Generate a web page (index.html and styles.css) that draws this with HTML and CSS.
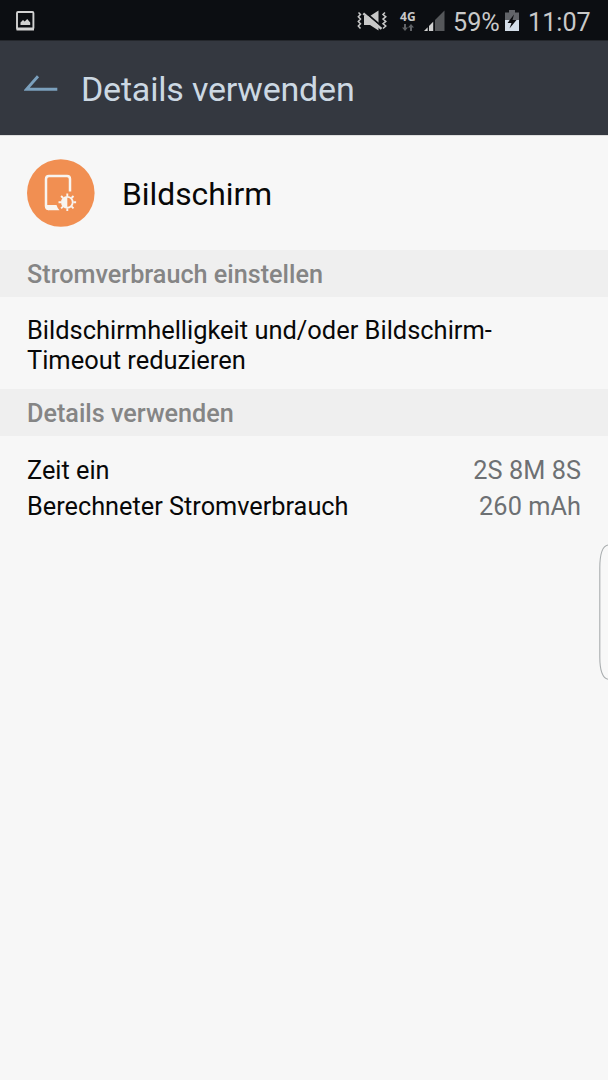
FILE: index.html
```html
<!DOCTYPE html>
<html lang="de">
<head>
<meta charset="utf-8">
<title>Details verwenden</title>
<link rel="stylesheet" href="styles.css">
</head>
<body>
<div class="screen">
  <div class="status">
    <svg class="picture" width="20" height="22" viewBox="0 0 20 22"><rect x="1" y="2" width="16.400" height="17" rx="1" fill="none" stroke="#d2d2d2" stroke-width="1.900"/><path d="M.5 17.500h17.500v3h-17.500z" fill="#d2d2d2"/><path d="M4.500 15v-2.500l2.500-2.500 1.700 1.500 2.500-2.500 3 3.500v2.500z" fill="#d2d2d2"/></svg>
    <svg class="mute" width="31" height="22" viewBox="0 0 31 22"><path d="M1.500 2.500l2 2-2.200 2.300 2.200 2.300-2.200 2.300 2.200 2.300-2.200 2.300 2.200 2.500M28 2.500l-2 2 2.800 2.300-2.800 2.300 2.800 2.300-2.800 2.300 2.800 2.300-2.800 2.500" fill="none" stroke="#c8c8c8" stroke-width="1.500"/><path d="M7 6h6l8.500-5.500v20l-8.500-5.500h-6z" fill="#c8c8c8"/><path d="M8 2.200L25 16.700" stroke="#0c0e12" stroke-width="2"/><path d="M6.300 3.300L24.500 18.800" stroke="#c8c8c8" stroke-width="2.400"/></svg>
    <div class="network"><span>4G</span><svg width="12" height="7" viewBox="0 0 12 7"><path d="M2 0h2v3.500h2l-3 3.500-3-3.500h2zM8 7h2v-3.500h2l-3-3.500-3 3.500h2z" fill="#606266"/></svg></div>
    <svg class="signal" width="21" height="22" viewBox="0 0 21 22"><path d="M20.500 .5v20.500h-9.500v-11z" fill="#55575a"/><path d="M0 21l3.700-3.700v3.700zM5 21v-5l4.200-4.200v9.200z" fill="#d0d0d0"/></svg>
    <span class="percent">59%</span>
    <svg class="battery" width="14" height="21" viewBox="0 0 14 21"><path d="M4 0h6v2.500h4v8h-14v-8h4z" fill="#626469"/><path d="M0 10h14v11h-14z" fill="#d3dde8"/><path d="M9 4.500l-6.500 8.500h4l-2 5.500 7-8.500h-4z" fill="#0a0b0e"/></svg>
    <span class="clock">11:07</span>
  </div>
  <header class="bar">
    <svg class="back" width="34" height="18" viewBox="0 0 34 18"><path d="M14 1.200L2.500 14.300H33.300" fill="none" stroke="#7ba0bd" stroke-width="2.900"/></svg>
    <h1>Details verwenden</h1>
  </header>
  <section class="app">
    <svg class="badge" width="68" height="68" viewBox="0 0 68 68"><circle cx="33.800" cy="34" r="33.800" fill="#f18f52"/><path d="M43 32.500V20q0-3-3-3H22q-3 0-3 3V47q0 3 3 3" fill="none" stroke="#f8f4f0" stroke-width="2.500"/><path d="M19 46h10.500q1 3.300 3 5.300h-10.500q-3 0-3-3z" fill="#f8f4f0"/><g transform="translate(40.300 43.200)" stroke="#f8f4f0"><circle r="5.400" fill="none" stroke-width="1.800"/><path d="M0-5.400a5.400 5.400 0 0 0 0 10.800z" fill="#f8f4f0" stroke="none"/><path d="M0-6v-2.800M0 6v2.800M-6 0h-2.800M6 0h2.800M-4.200-4.200l-2-2M4.200-4.200l2-2M-4.200 4.200l-2 2M4.200 4.200l2 2" stroke-width="1.900"/></g></svg>
    <h2>Bildschirm</h2>
  </section>
  <h3>Stromverbrauch einstellen</h3>
  <p class="advice">Bildschirmhelligkeit und/oder Bildschirm-<br>Timeout reduzieren</p>
  <h3>Details verwenden</h3>
  <dl>
    <div><dt>Zeit ein</dt><dd>2S 8M 8S</dd></div>
    <div><dt>Berechneter Stromverbrauch</dt><dd>260 mAh</dd></div>
  </dl>
  <svg class="edge" width="9" height="137" viewBox="0 0 9 137"><path d="M9 1C3.500 2 .8 10 .8 24V113C.8 127 3.500 134 9 135.300" fill="#f8f8f8" stroke="#a9adaf" stroke-width="1.100"/></svg>
</div>
</body>
</html>
```
FILE: styles.css
```css
* { box-sizing: border-box; margin: 0; padding: 0; }
body { background: #f7f7f7; font-family: Roboto, sans-serif; color: #080808; }
.screen { position: relative; width: 608px; height: 1080px; overflow: hidden; }
.status { display: flex; align-items: flex-start; height: 41px; padding: 10px 0 0 16px; background: #0c0e12; color: #c9c9c9; border-bottom: 1px solid #24272c; }
.mute { margin-left: 321px; }
.network { display: flex; flex-direction: column; align-items: center; width: 18px; margin-left: 11px; padding-top: 1px; }
.network span { font: 700 12px/12px "Open Sans", sans-serif; letter-spacing: .3px; }
.network svg { margin-top: 1px; }
.signal { margin-left: 7px; }
.percent, .clock { font-size: 25.2px; line-height: 25px; white-space: nowrap; }
.percent { width: 46px; margin-left: 8px; }
.battery { margin-left: 6px; }
.clock { margin-left: 9px; }
.bar { display: flex; align-items: center; height: 94px; padding-left: 24px; background: #343840; color: #ccd8e3; }
.back { margin-top: -9px; }
h1 { margin: 2px 0 0 23px; font-size: 34px; line-height: 40px; font-weight: 400; letter-spacing: -.2px; white-space: nowrap; }
.app { display: flex; align-items: center; height: 115px; padding-left: 27px; border-top: 1px solid #dedede; }
.badge { margin-top: -1px; }
h2 { margin: 1px 0 0 27px; font-size: 31.8px; line-height: 38px; font-weight: 400; }
h3 { height: 47px; padding-left: 27px; background: #efefef; color: #858585; font-size: 25.2px; line-height: 50px; font-weight: 500; }
.advice { height: 92px; padding: 18px 27px 0; font-size: 25.45px; line-height: 30px; white-space: nowrap; }
dl { padding: 17px 27px; font-size: 25.3px; line-height: 36px; }
dl div { display: flex; justify-content: space-between; }
dd { color: #6d7073; letter-spacing: .05px; }
.edge { position: absolute; right: 0; top: 544px; }
```
